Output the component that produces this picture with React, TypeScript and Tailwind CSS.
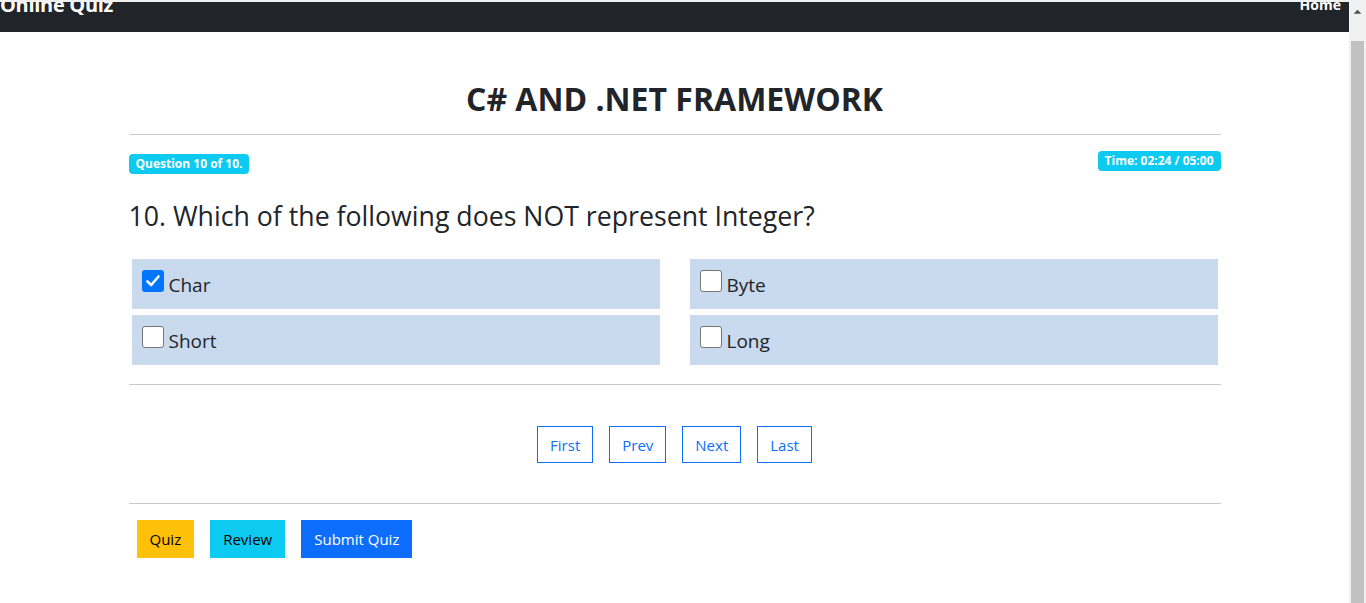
import React from 'react';

const options = [
  { label: 'Char', checked: true },
  { label: 'Byte', checked: false },
  { label: 'Short', checked: false },
  { label: 'Long', checked: false },
];

const pager = ['First', 'Prev', 'Next', 'Last'];

function CheckBox({ checked }: { checked: boolean }) {
  if (checked) {
    return (
      <div className="w-[22px] h-[22px] rounded-[3px] bg-[#0075ff] flex items-center justify-center shrink-0">
        <svg width="16" height="16" viewBox="0 0 16 16" fill="none">
          <path d="M2.5 8.5 L6.2 12 L13.5 3.5" stroke="white" strokeWidth="2.6" strokeLinecap="round" strokeLinejoin="round" />
        </svg>
      </div>
    );
  }
  return <div className="w-[22px] h-[22px] rounded-[3px] bg-white border border-[#767676] shrink-0" />;
}

function Scrollbar() {
  return (
    <div className="w-[17px] h-full bg-[#f1f1f1] flex flex-col items-center shrink-0">
      <svg width="17" height="17" viewBox="0 0 17 17" className="mt-[3px]">
        <path d="M4.5 11 L8.5 7 L12.5 11 Z" fill="#505050" />
      </svg>
      <div className="mt-[22px] w-[13px] h-[580px] bg-[#c1c1c1]" />
    </div>
  );
}

export default function App() {
  return (
    <div
      className="flex h-[603px] w-[1366px] overflow-hidden bg-white text-[#212529]"
      style={{ fontFamily: '"Open Sans", "Noto Sans", sans-serif' }}
    >
      <div className="flex-1 flex flex-col">
        <div className="h-[2px] bg-[#f0f0f0]" />
        <nav className="h-[30px] bg-[#212529] flex justify-between items-start overflow-hidden pr-[8px]">
          <span className="text-white font-bold text-[20px] leading-[20px] mt-[-7px] tracking-[-0.3px]">Online Quiz</span>
          <span className="text-white font-bold text-[14px] leading-[14px] mt-[-4px]">Home</span>
        </nav>

        <main className="w-[1092px] mx-auto">
          <h2 className="mt-[48px] text-center font-bold text-[32px] leading-[38px]">C# AND .NET FRAMEWORK</h2>
          <hr className="mt-[16px] border-t border-[#c8c9ca]" />

          <div className="flex justify-between items-start mt-[16px]">
            <span className="mt-[3px] bg-[#0dcaf0] text-white font-bold text-[12px] leading-[12px] px-[7px] py-[4px] rounded-[4px]">
              Question 10 of 10.
            </span>
            <span className="bg-[#0dcaf0] text-white font-bold text-[12px] leading-[12px] px-[7px] py-[4px] rounded-[4px]">
              Time: 02:24 / 05:00
            </span>
          </div>

          <h3 className="mt-[26px] text-[26.7px] leading-[32px]">10. Which of the following does NOT represent Integer?</h3>

          <div className="grid grid-cols-2 gap-x-[30px] gap-y-[6px] px-[3px] mt-[27px]">
            {options.map((o) => (
              <label key={o.label} className="h-[50px] bg-[#c9d9ee] flex items-start pl-[10px] pt-[11px] gap-[5px]">
                <CheckBox checked={o.checked} />
                <span className="text-[19px] leading-[24px] mt-[3px]">{o.label}</span>
              </label>
            ))}
          </div>

          <hr className="mt-[19px] border-t border-[#c8c9ca]" />

          <div className="flex justify-center gap-[16px] mt-[41px]">
            {pager.map((p) => (
              <button key={p} className="h-[37px] px-[12px] border border-[#0d6efd] text-[#0d6efd] text-[15px] leading-[20px] bg-white">
                {p}
              </button>
            ))}
          </div>

          <hr className="mt-[40px] border-t border-[#c8c9ca]" />

          <div className="flex gap-[16px] mt-[16px] pl-[8px]">
            <button className="h-[38px] px-[13px] bg-[#ffc107] text-black text-[15px]">Quiz</button>
            <button className="h-[38px] px-[13px] bg-[#0dcaf0] text-black text-[15px]">Review</button>
            <button className="h-[38px] px-[13px] bg-[#0d6efd] text-white text-[15px]">Submit Quiz</button>
          </div>
        </main>
      </div>
      <Scrollbar />
    </div>
  );
}
